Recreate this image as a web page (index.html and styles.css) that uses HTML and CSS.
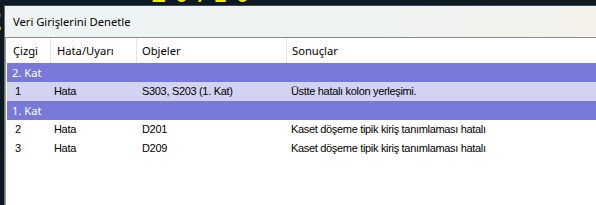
FILE: index.html
```html
<!DOCTYPE html>
<html>
<head>
<meta charset="utf-8">
<link rel="stylesheet" href="styles.css">
</head>
<body>
<div class="desk">
  <div class="bgtext bg-left">2</div>
  <div class="bgtext bg-top">Z 0 / 1 0</div>
  <div class="window">
    <div class="titlebar">Veri Girişlerini Denetle</div>
    <div class="list">
      <div class="row head">
        <div class="c c1">Çizgi</div>
        <div class="c c2">Hata/Uyarı</div>
        <div class="c c3">Objeler</div>
        <div class="c c4">Sonuçlar</div>
      </div>
      <div class="group">2. Kat</div>
      <div class="row item sel">
        <div class="c c1">1</div>
        <div class="c c2">Hata</div>
        <div class="c c3">S303, S203 (1. Kat)</div>
        <div class="c c4">Üstte hatalı kolon yerleşimi.</div>
      </div>
      <div class="group">1. Kat</div>
      <div class="row item">
        <div class="c c1">2</div>
        <div class="c c2">Hata</div>
        <div class="c c3">D201</div>
        <div class="c c4">Kaset döşeme tipik kiriş tanımlaması hatalı</div>
      </div>
      <div class="row item">
        <div class="c c1">3</div>
        <div class="c c2">Hata</div>
        <div class="c c3">D209</div>
        <div class="c c4">Kaset döşeme tipik kiriş tanımlaması hatalı</div>
      </div>
    </div>
  </div>
</div>
</body>
</html>
```
FILE: styles.css
```css
html, body {
  margin: 0;
  padding: 0;
  background: #0d1a24;
  overflow: hidden;
}
.desk {
  position: relative;
  width: 596px;
  height: 205px;
  overflow: hidden;
}
.bgtext {
  position: absolute;
  color: #f2e600;
  font-family: "Liberation Sans", sans-serif;
  font-weight: bold;
}
.bg-left {
  left: -15px;
  top: 3px;
  font-size: 30px;
}
.bg-top {
  left: 152px;
  top: -18px;
  font-size: 22px;
  letter-spacing: 2px;
}
.window {
  position: relative;
  margin: 5px 0 0 4px;
  width: 620px;
  height: 220px;
  border-left: 1px solid #6a7278;
  border-top: 1px solid #3c4a52;
  background: #ffffff;
}
.titlebar {
  height: 31px;
  background: linear-gradient(to right, #eef4f4 0%, #eef3f1 60%, #f6f2ea 100%);
  font-family: "Noto Sans", "Open Sans", sans-serif;
  font-size: 11.2px;
  color: #000;
  padding-left: 8px;
  line-height: 31px;
  box-sizing: border-box;
}
.list {
  border-top: 1px solid #8a8a8a;
  border-left: 1px solid #a0a0a0;
  padding-left: 1px;
  height: 200px;
  background: #fff;
  font-family: "Liberation Sans", Arial, sans-serif;
  font-size: 11px;
  letter-spacing: -0.32px;
  color: #000;
}
.row {
  display: flex;
}
.head {
  height: 25px;
  align-items: center;
  font-family: "Noto Sans", "Open Sans", sans-serif;
  font-size: 11.2px;
  letter-spacing: 0;
}
.head .c {
  height: 25px;
  line-height: 25px;
  border-right: 1px solid #e5e5e5;
}
.c {
  box-sizing: border-box;
  white-space: nowrap;
  overflow: hidden;
}
.c1 { width: 44px; padding-left: 6px; }
.c2 { width: 86px; padding-left: 6px; }
.c3 { width: 150px; padding-left: 5px; }
.c4 { width: 330px; padding-left: 5px; border-right: none !important; }
.group {
  height: 19px;
  line-height: 19px;
  background: #7878d9;
  color: #ffffff;
  padding-left: 5px;
  font-family: "Noto Sans", "Open Sans", sans-serif;
  font-size: 11.2px;
  letter-spacing: 0;
}
.item {
  height: 19px;
  line-height: 19px;
}
.item .c1 { padding-left: 8px; }
.item .c2 { padding-left: 3px; }
.item .c3 { padding-left: 5px; }
.item .c4 { padding-left: 4px; }
.sel {
  background: #d2d2f1;
}
```
